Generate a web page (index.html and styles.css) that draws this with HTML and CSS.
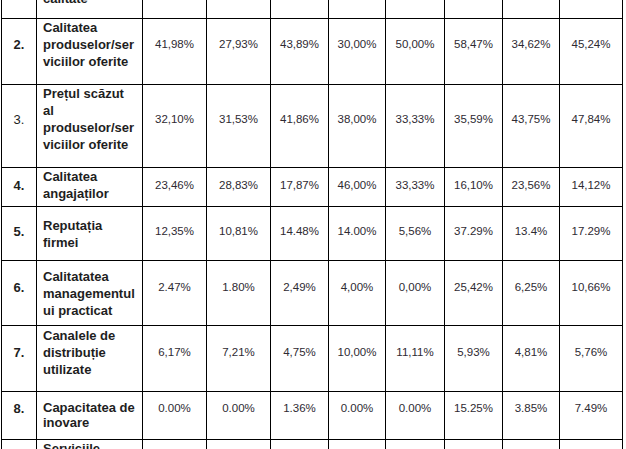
FILE: index.html
```html
<!DOCTYPE html>
<html lang="ro">
<head>
<meta charset="utf-8">
<title>Factori de competitivitate</title>
<link rel="stylesheet" href="styles.css">
</head>
<body>
<table class="grid">
  <colgroup>
    <col class="c-nr">
    <col class="c-lbl">
    <col class="c-a">
    <col class="c-b">
    <col class="c-c">
    <col class="c-d">
    <col class="c-e">
    <col class="c-f">
    <col class="c-g">
    <col class="c-h">
  </colgroup>
  <tbody>
    <tr class="r1">
      <td class="nr">1.</td>
      <td class="lbl">Raportul<br>preț /<br>calitate</td>
      <td>38,27%</td><td>36,04%</td><td>39,11%</td><td>42,00%</td><td>38,89%</td><td>40,68%</td><td>36,54%</td><td>41,21%</td>
    </tr>
    <tr class="r2">
      <td class="nr">2.</td>
      <td class="lbl">Calitatea<br>produselor/ser<br>viciilor oferite</td>
      <td>41,98%</td><td>27,93%</td><td>43,89%</td><td>30,00%</td><td>50,00%</td><td>58,47%</td><td>34,62%</td><td>45,24%</td>
    </tr>
    <tr class="r3">
      <td class="nr light">3.</td>
      <td class="lbl">Prețul scăzut<br>al<br>produselor/ser<br>viciilor oferite</td>
      <td>32,10%</td><td>31,53%</td><td>41,86%</td><td>38,00%</td><td>33,33%</td><td>35,59%</td><td>43,75%</td><td>47,84%</td>
    </tr>
    <tr class="r4">
      <td class="nr">4.</td>
      <td class="lbl">Calitatea<br>angajaților</td>
      <td>23,46%</td><td>28,83%</td><td>17,87%</td><td>46,00%</td><td>33,33%</td><td>16,10%</td><td>23,56%</td><td>14,12%</td>
    </tr>
    <tr class="r5">
      <td class="nr">5.</td>
      <td class="lbl">Reputația<br>firmei</td>
      <td>12,35%</td><td>10,81%</td><td>14.48%</td><td>14.00%</td><td>5,56%</td><td>37.29%</td><td>13.4%</td><td>17.29%</td>
    </tr>
    <tr class="r6">
      <td class="nr">6.</td>
      <td class="lbl">Calitatatea<br>managementul<br>ui practicat</td>
      <td>2.47%</td><td>1.80%</td><td>2,49%</td><td>4,00%</td><td>0,00%</td><td>25,42%</td><td>6,25%</td><td>10,66%</td>
    </tr>
    <tr class="r7">
      <td class="nr">7.</td>
      <td class="lbl">Canalele de<br>distribuție<br>utilizate</td>
      <td>6,17%</td><td>7,21%</td><td>4,75%</td><td>10,00%</td><td>11,11%</td><td>5,93%</td><td>4,81%</td><td>5,76%</td>
    </tr>
    <tr class="r8">
      <td class="nr">8.</td>
      <td class="lbl">Capacitatea de<br>inovare</td>
      <td>0.00%</td><td>0.00%</td><td>1.36%</td><td>0.00%</td><td>0.00%</td><td>15.25%</td><td>3.85%</td><td>7.49%</td>
    </tr>
    <tr class="r9">
      <td class="nr">9.</td>
      <td class="lbl">Serviciile<br>post-vânzare<br>oferite<br>clienților</td>
      <td>4,94%</td><td>3,60%</td><td>5,03%</td><td>6,00%</td><td>5,56%</td><td>8,47%</td><td>5,29%</td><td>6,91%</td>
    </tr>
  </tbody>
</table>
</body>
</html>
```

FILE: styles.css
```css
html, body {
  margin: 0;
  padding: 0;
  background: #ffffff;
}

body {
  overflow: hidden;
}

.grid {
  border-collapse: collapse;
  table-layout: fixed;
  width: 622px;
  margin: -48px 0 0 1px;
  font-family: "Liberation Sans", Arial, sans-serif;
  color: #2e2a32;
}

.c-nr { width: 35px; }
.c-lbl { width: 106px; }
.c-a { width: 64px; }
.c-b { width: 64px; }
.c-c { width: 58px; }
.c-d { width: 57px; }
.c-e { width: 59px; }
.c-f { width: 58px; }
.c-g { width: 57px; }
.c-h { width: 63px; }

.grid td {
  border: 1px solid #000;
  padding: 0 2px 14px;
  text-align: center;
  vertical-align: middle;
  font-size: 11.5px;
  line-height: 17px;
  white-space: nowrap;
  overflow: visible;
}

.grid td.nr {
  font-size: 13px;
  font-weight: bold;
  color: #1e1e1e;
}

.grid td.nr.light {
  font-weight: normal;
}

.grid td.lbl {
  text-align: left;
  padding-left: 6px;
  padding-right: 2px;
  font-size: 13px;
  font-weight: bold;
  color: #1e1e1e;
}

.r1 { height: 66px; }
.r1 td.lbl { vertical-align: bottom; padding-bottom: 11px; }

.r2 { height: 66px; }
.r3 { height: 82px; }

.r4 { height: 39px; }
.r4 td { padding-bottom: 4px; }

.r5 { height: 54px; }
.r5 td { padding-bottom: 5px; }
.r5 td.lbl { padding-bottom: 0; }

.r6 { height: 65px; }
.r6 td { padding-bottom: 12px; }
.r6 td.lbl { padding-bottom: 0; }

.r7 { height: 66px; }
.r7 td { padding-bottom: 12px; }

.r8 { height: 48px; }
.r8 td { padding-bottom: 14px; }
.r8 td.lbl { padding-bottom: 2px; line-height: 15px; }

.r9 { height: 82px; }
```
